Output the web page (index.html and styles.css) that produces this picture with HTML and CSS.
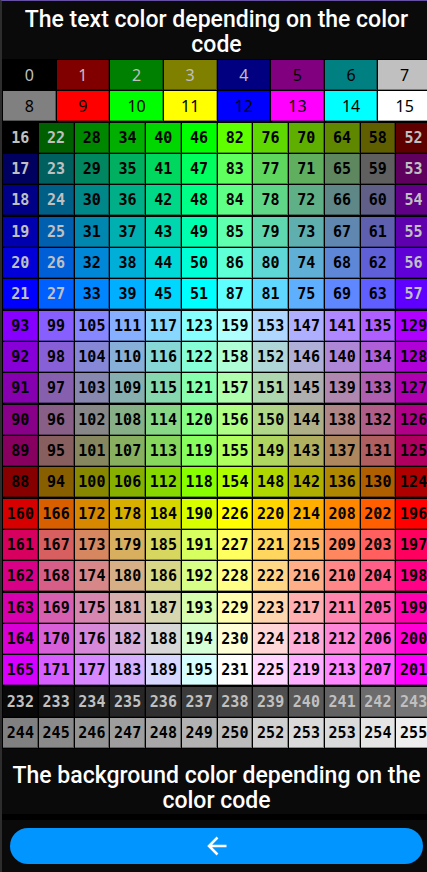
FILE: index.html
```html
<!DOCTYPE html>
<html lang="en">
<head>
<meta charset="utf-8">
<meta name="viewport" content="width=device-width, initial-scale=1">
<title>Color codes</title>
<link rel="stylesheet" href="styles.css">
</head>
<body>
<main class="page">
  <h2 class="caption">The text color depending on the color code</h2>
  <table class="palette palette-basic"><tbody id="basic"></tbody></table>
  <table class="palette palette-extended"><tbody id="extended"></tbody></table>
  <h2 class="caption caption-bottom">The background color depending on the color code</h2>
  <footer class="footer">
    <button class="back" type="button" aria-label="Back">
      <svg width="20" height="20" viewBox="0 0 20 20" fill="none" stroke="currentColor" stroke-width="2.5" aria-hidden="true">
        <path d="M19.5 10H2M10.5 1.5L2 10L10.5 18.5"/>
      </svg>
    </button>
  </footer>
</main>
<script src="script.js"></script>
</body>
</html>
```
FILE: styles.css
```css
* {
  box-sizing: border-box;
}

html {
  background: #0a0a0a;
}

body {
  margin: 0;
  min-height: 100vh;
  overflow: hidden;
  border-top: 1px solid #6650a4;
  border-left: 2px solid #2d2d2d;
  background: #0a0a0a;
  color: #fff;
  font-family: Roboto, "Liberation Sans", sans-serif;
}

.page {
  margin-right: -4px;
}

.caption {
  margin: 0;
  padding: 6px 12px 2px;
  font-size: 23px;
  line-height: 25px;
  font-weight: 500;
  text-align: center;
}

.palette {
  width: 100%;
  table-layout: fixed;
  border-collapse: separate;
  border-spacing: 0;
  background: #000;
}

.palette td {
  height: 31px;
  padding: 0;
  border: solid #000;
  border-width: 0 0 1px 1px;
  background-clip: padding-box;
  box-shadow: inset -1px -1px rgb(0 0 0 / 35%);
  color: #000;
  text-align: center;
  line-height: 30px;
}

.palette td.light {
  color: #c0c0c0;
}

.palette-basic {
  border-top: 1px solid #000;
  font-family: "Noto Sans", sans-serif;
  font-size: 16px;
}

.palette-extended {
  border-top: 1px solid #000;
  font-family: "DejaVu Sans Mono", monospace;
  font-size: 15px;
  font-weight: 700;
}

.palette-extended tr:nth-child(3n) td {
  height: 32px;
  border-bottom-width: 2px;
}

.caption-bottom {
  padding: 14px 8px 1px;
}

.footer {
  padding: 8px;
  border-top: 6px solid #000;
}

.back {
  display: flex;
  align-items: center;
  justify-content: center;
  width: 100%;
  height: 36px;
  padding: 0;
  border: 0;
  border-radius: 18px;
  background: #0095ff;
  color: #fff;
}
```
FILE: script.js
```js
const BASIC = [
  '#000000', '#800000', '#008000', '#808000', '#000080', '#800080', '#008080', '#c0c0c0',
  '#808080', '#ff0000', '#00ff00', '#ffff00', '#0000ff', '#ff00ff', '#00ffff', '#ffffff'
];
const LEVELS = [0, 95, 135, 175, 215, 255];

function colorOf(code) {
  if (code < 16) return BASIC[code];
  if (code >= 232) {
    const grey = 8 + (code - 232) * 10;
    return `rgb(${grey}, ${grey}, ${grey})`;
  }
  const n = code - 16;
  return `rgb(${LEVELS[Math.floor(n / 36)]}, ${LEVELS[Math.floor(n / 6) % 6]}, ${LEVELS[n % 6]})`;
}

function hasLightText(code) {
  return code < 5 || (code >= 16 && code <= 27) || (code >= 52 && code <= 57) ||
    (code >= 232 && code <= 243);
}

function addRow(body, codes) {
  const row = body.insertRow();
  for (const code of codes) {
    const cell = row.insertCell();
    cell.textContent = code;
    cell.style.backgroundColor = colorOf(code);
    if (hasLightText(code)) cell.className = 'light';
  }
}

// Six codes going up from the left cube face, six going down on the right one.
function cubeRow(left, right) {
  const steps = [0, 1, 2, 3, 4, 5];
  return [...steps.map(s => left + 6 * s), ...steps.map(s => right - 6 * s)];
}

const basic = document.getElementById('basic');
addRow(basic, [0, 1, 2, 3, 4, 5, 6, 7]);
addRow(basic, [8, 9, 10, 11, 12, 13, 14, 15]);

const extended = document.getElementById('extended');
for (let i = 0; i < 6; i++) addRow(extended, cubeRow(16 + i, 82 + i));
for (let i = 0; i < 6; i++) addRow(extended, cubeRow(93 - i, 159 - i));
for (let i = 0; i < 6; i++) addRow(extended, cubeRow(160 + i, 226 + i));
addRow(extended, [232, 233, 234, 235, 236, 237, 238, 239, 240, 241, 242, 243]);
addRow(extended, [244, 245, 246, 247, 248, 249, 250, 252, 253, 253, 254, 255]);
```
